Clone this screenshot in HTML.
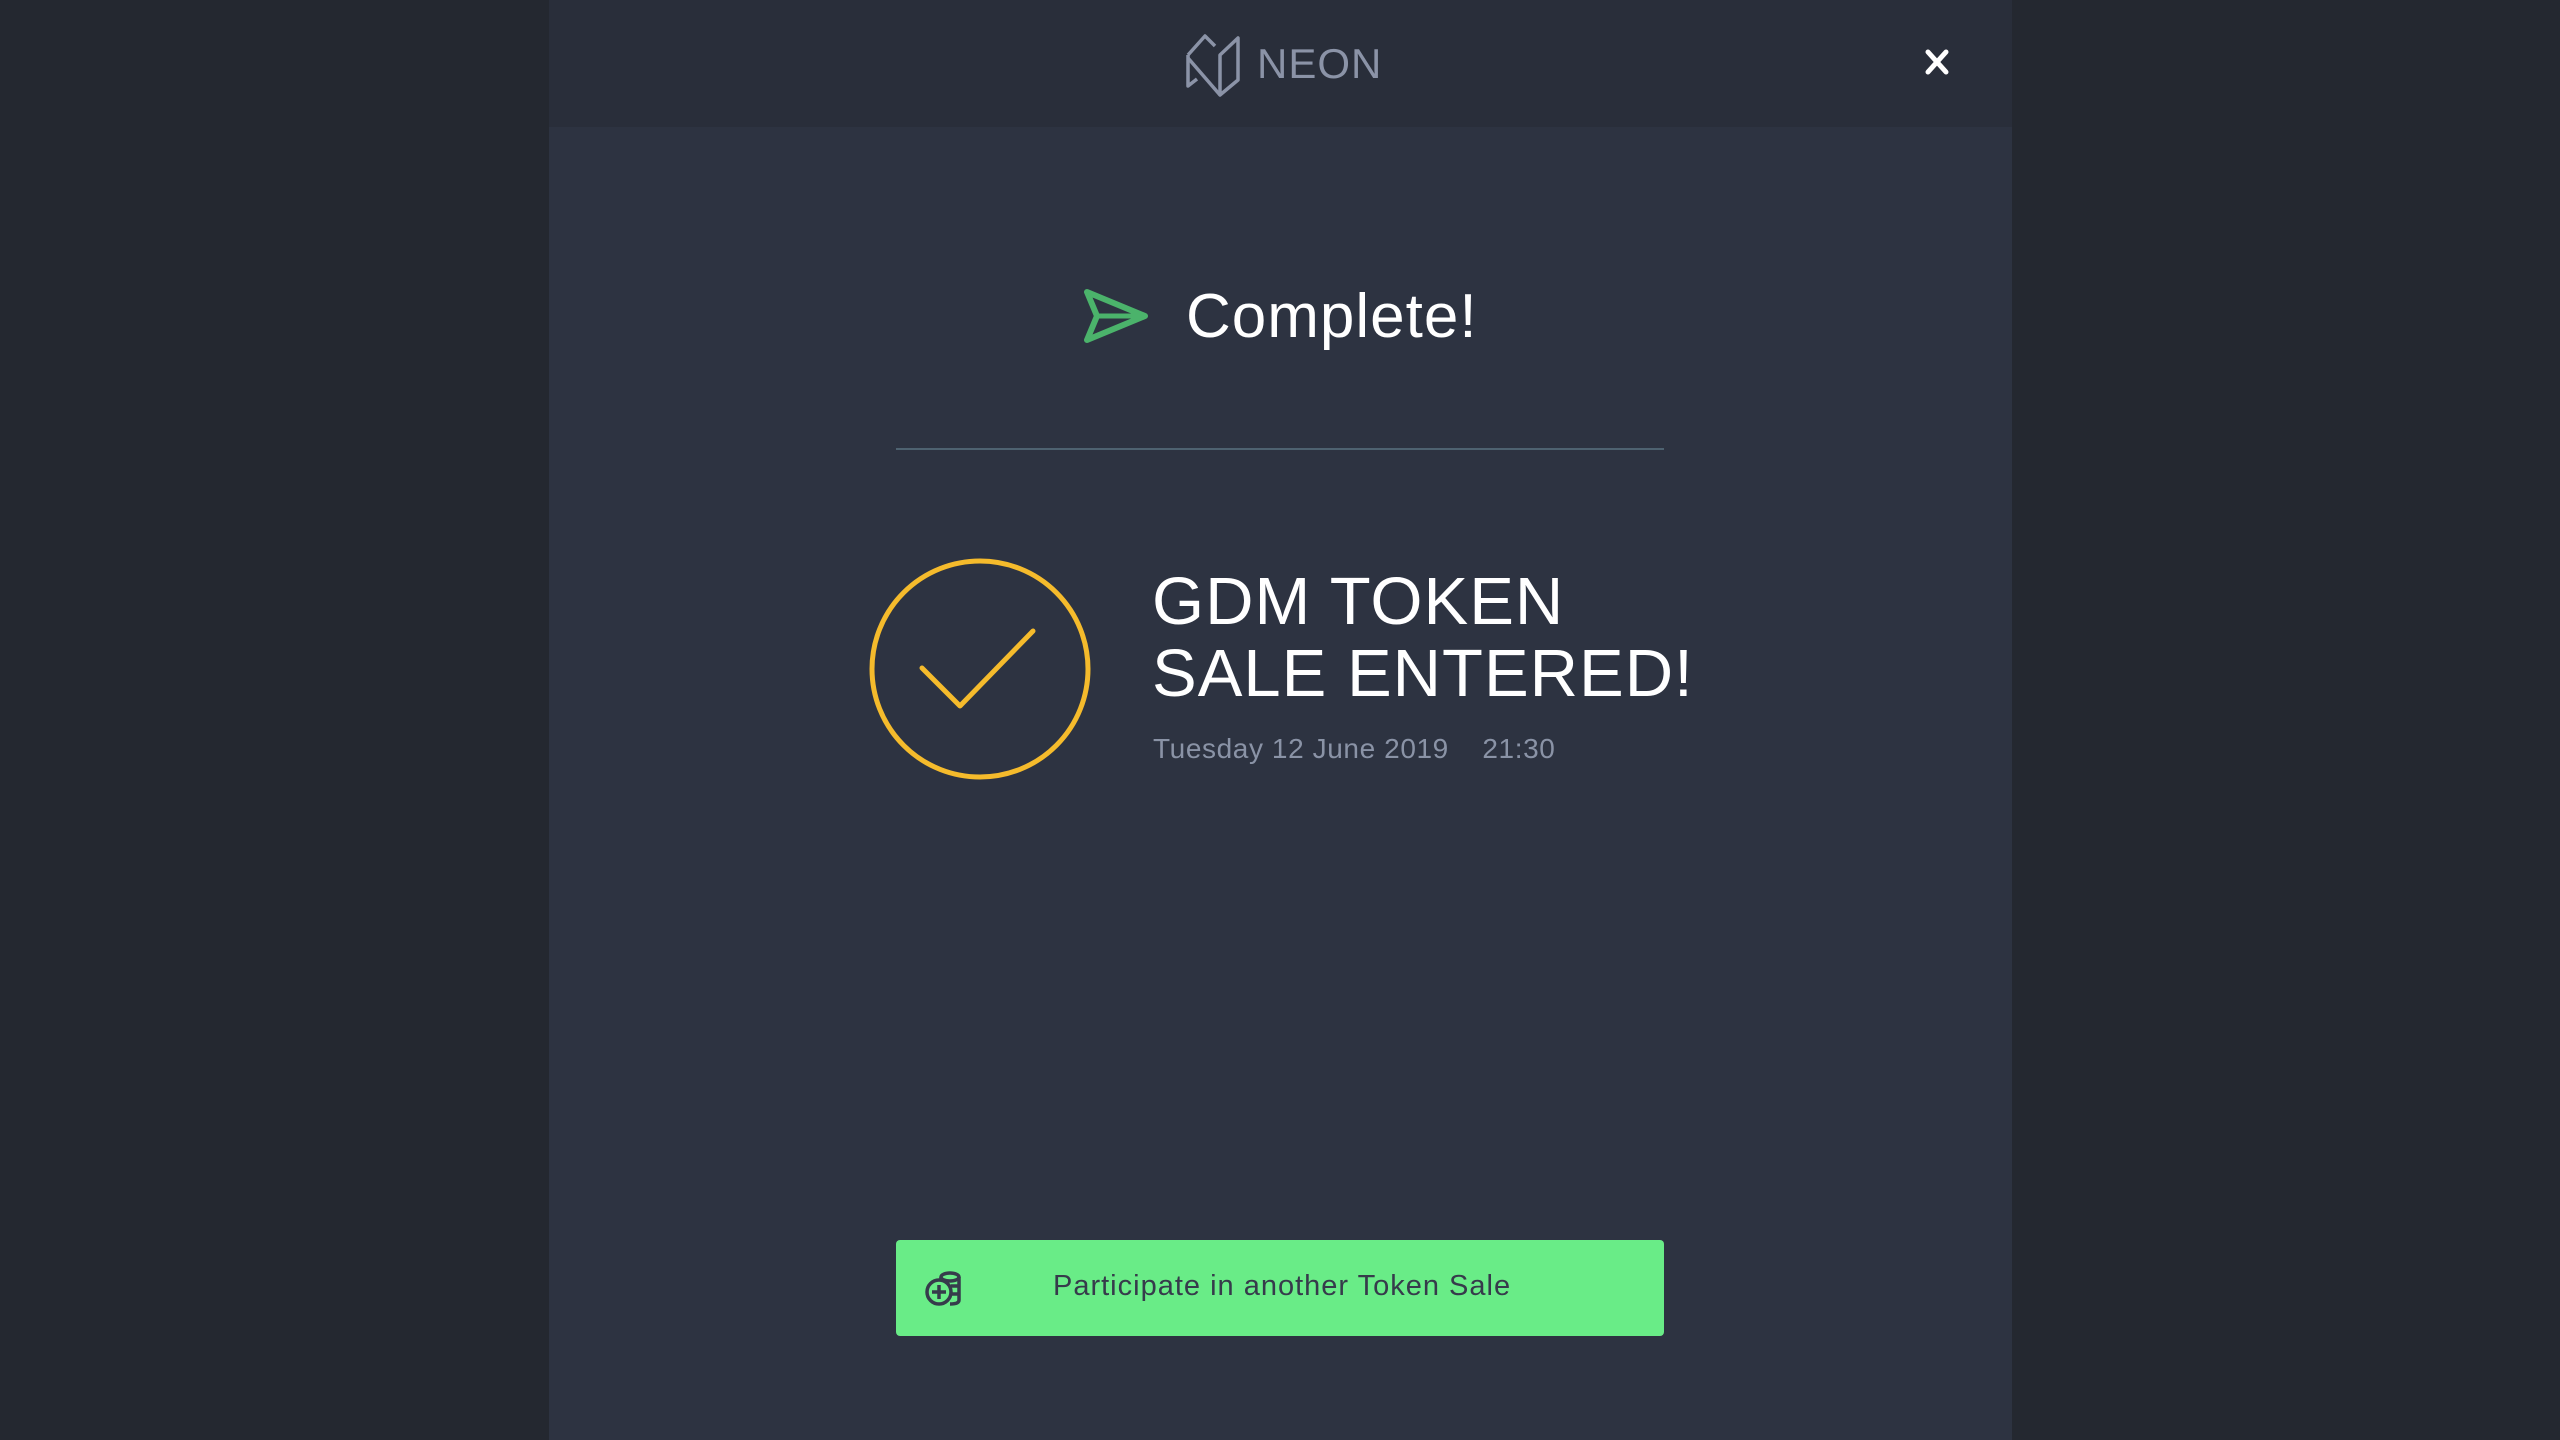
<!DOCTYPE html>
<html><head><meta charset="utf-8"><style>
html,body{margin:0;padding:0;width:2560px;height:1440px;overflow:hidden;background:#242830;font-family:"Liberation Sans",sans-serif}
.panel{position:absolute;left:549px;top:0;width:1463px;height:1440px;background:#2d3341}
.hdr{position:absolute;left:549px;top:0;width:1463px;height:127px;background:#292e3a}
.t{position:absolute;white-space:nowrap}
</style></head><body>
<div class="panel"></div>
<div class="hdr"></div>
<svg style="position:absolute;left:0;top:0" width="2560" height="1440">
 <g fill="none" stroke="#8b93a7" stroke-width="3.5" stroke-linejoin="round">
  <polyline points="1188,55 1205,36 1215,46"/>
  <polyline points="1188,55 1188,86 1197,79"/>
  <line x1="1188" y1="58" x2="1220" y2="95"/>
  <polygon points="1220,55 1238,38 1238,80 1220,95"/>
 </g>
 <g stroke="#fff" stroke-width="5" stroke-linecap="round">
  <line x1="1928" y1="52" x2="1946" y2="72"/><line x1="1946" y1="52" x2="1928" y2="72"/>
 </g>
 <polygon points="1087,292 1145,316 1087,340 1097,316" fill="none" stroke="#4bb36b" stroke-width="6" stroke-linejoin="round"/>
 <line x1="1097" y1="316" x2="1145" y2="316" stroke="#4bb36b" stroke-width="5"/>
 <line x1="896" y1="449" x2="1664" y2="449" stroke="#4e6270" stroke-width="2"/>
 <circle cx="980" cy="669" r="108" fill="none" stroke="#f5bb2c" stroke-width="5"/>
 <polyline points="922,668 960,706 1033,631" fill="none" stroke="#f5bb2c" stroke-width="5" stroke-linecap="round" stroke-linejoin="round"/>
 <rect x="896" y="1240" width="768" height="96" rx="4" fill="#69ec87"/>
 <g fill="none" stroke="#363b4b" stroke-width="3.5">
  <ellipse cx="950" cy="1277" rx="9" ry="4"/>
  <path d="M941 1277 V1300 M959 1277 V1300 Q959 1304 950 1304 M951 1286 h8 M951 1294 h8"/>
  <circle cx="939" cy="1292" r="12" fill="#69ec87"/>
  <path d="M939 1285 v14 M932 1292 h14"/>
 </g>
</svg>
<div class="t" style="left:1257px;top:40px;font-size:42px;color:#8b93a7;letter-spacing:1px">NEON</div>
<div class="t" style="left:1186px;top:281px;font-size:62px;color:#fff;letter-spacing:1px">Complete!</div>
<div class="t" style="left:1152px;top:566px;font-size:67px;color:#fff;line-height:72px;letter-spacing:1px">GDM TOKEN<br>SALE ENTERED!</div>
<div class="t" style="left:1153px;top:733px;font-size:28px;color:#8a93a6;letter-spacing:0.6px">Tuesday 12 June 2019 &nbsp;&nbsp;&nbsp;21:30</div>
<div class="t" style="left:1053px;top:1270px;font-size:29px;color:#363b4b;letter-spacing:1px">Participate in another Token Sale</div>
</body></html>
